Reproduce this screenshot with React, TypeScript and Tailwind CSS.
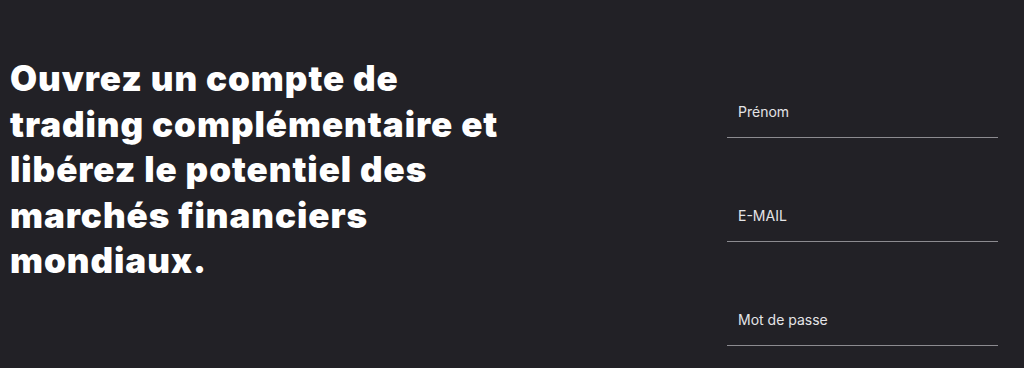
export default function App() {
  const fields = ['Prénom', 'E-MAIL', 'Mot de passe'];
  return (
    <div className="w-[1024px] h-[368px] overflow-hidden bg-[#222126] flex justify-between">
      <div className="pl-[10px] pt-[56px]">
        <h1 className="text-white text-[35px] leading-[45.5px] font-black tracking-[0.95px] w-[540px] font-['Inter',sans-serif]">
          Ouvrez un compte de
          <br />
          trading complémentaire et
          <br />
          libérez le potentiel des
          <br />
          marchés financiers
          <br />
          mondiaux.
        </h1>
      </div>
      <div className="w-[271px] mr-[26px] pt-[99px] flex flex-col gap-[65px]">
        {fields.map((f) => (
          <label key={f} className="block border-b border-[#8c8b90] pb-[14px] pl-[11px]">
            <span className="text-[#e4e4e6] text-[14px] leading-[20px] font-['Inter',sans-serif]">{f}</span>
          </label>
        ))}
      </div>
    </div>
  );
}
